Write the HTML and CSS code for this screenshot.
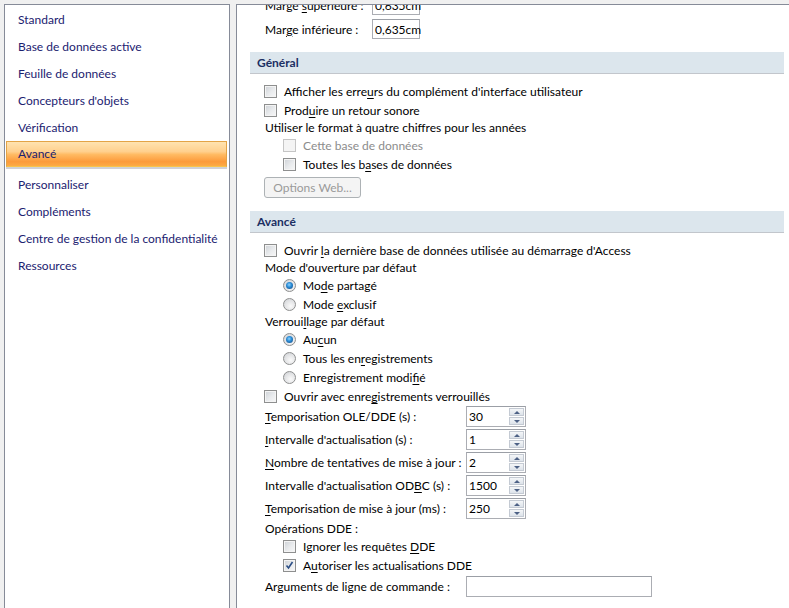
FILE: index.html
```html
<!DOCTYPE html>
<html lang="fr">
<head>
<meta charset="utf-8">
<title>Options Access - Avancé</title>
<link rel="stylesheet" href="styles.css">
</head>
<body>
<div class="window">
  <nav class="nav">
    <ul class="nav-list">
      <li class="nav-item">Standard</li>
      <li class="nav-item">Base de données active</li>
      <li class="nav-item">Feuille de données</li>
      <li class="nav-item">Concepteurs d'objets</li>
      <li class="nav-item">Vérification</li>
      <li class="nav-item selected">Avancé</li>
      <li class="nav-item">Personnaliser</li>
      <li class="nav-item">Compléments</li>
      <li class="nav-item">Centre de gestion de la confidentialité</li>
      <li class="nav-item">Ressources</li>
    </ul>
  </nav>
  <main class="panel">
    <div class="scroll">
      <div class="margins">
        <div class="field-row margin-row"><span class="margin-label">Marge <u>s</u>upérieure :</span><span class="textbox small">0,635cm</span></div>
        <div class="field-row margin-row"><span class="margin-label">Mar<u>g</u>e inférieure :</span><span class="textbox small">0,635cm</span></div>
      </div>

      <h2 class="section-head">Général</h2>
      <div class="section-body">
        <div class="check-row"><span class="cb"></span><span>Afficher les erre<u>u</u>rs du complément d'interface utilisateur</span></div>
        <div class="check-row"><span class="cb"></span><span>Prod<u>u</u>ire un retour sonore</span></div>
        <div class="label-row">Utiliser le format à quatre chiffres pour les années</div>
        <div class="check-row sub disabled"><span class="cb"></span><span>Cette base de données</span></div>
        <div class="check-row sub"><span class="cb"></span><span>Toutes les b<u>a</u>ses de données</span></div>
        <div class="button-row"><span class="btn disabled">Options Web...</span></div>
      </div>

      <h2 class="section-head">Avancé</h2>
      <div class="section-body">
        <div class="check-row"><span class="cb"></span><span>Ouvrir <u>l</u>a dernière base de données utilisée au démarrage d'Access</span></div>
        <div class="label-row">Mode d'ouverture par défaut</div>
        <div class="check-row sub"><span class="rb on"></span><span>Mo<u>d</u>e partagé</span></div>
        <div class="check-row sub"><span class="rb"></span><span>Mode <u>e</u>xclusif</span></div>
        <div class="label-row">Verroui<u>l</u>lage par défaut</div>
        <div class="check-row sub"><span class="rb on"></span><span>Au<u>c</u>un</span></div>
        <div class="check-row sub"><span class="rb"></span><span>Tous les en<u>r</u>egistrements</span></div>
        <div class="check-row sub"><span class="rb"></span><span>Enregistrement modi<u>f</u>ié</span></div>
        <div class="check-row"><span class="cb"></span><span>Ouvrir avec enre<u>g</u>istrements verrouillés</span></div>

        <div class="spin-list">
          <div class="field-row"><span class="field-label"><u>T</u>emporisation OLE/DDE (s) :</span><span class="textbox spin"><span class="val">30</span><span class="spin-btns"><span class="sb up"></span><span class="sb down"></span></span></span></div>
          <div class="field-row"><span class="field-label"><u>I</u>ntervalle d'actualisation (s) :</span><span class="textbox spin"><span class="val">1</span><span class="spin-btns"><span class="sb up"></span><span class="sb down"></span></span></span></div>
          <div class="field-row"><span class="field-label"><u>N</u>ombre de tentatives de mise à jour :</span><span class="textbox spin"><span class="val">2</span><span class="spin-btns"><span class="sb up"></span><span class="sb down"></span></span></span></div>
          <div class="field-row"><span class="field-label">Intervalle d'actualisation OD<u>B</u>C (s) :</span><span class="textbox spin"><span class="val">1500</span><span class="spin-btns"><span class="sb up"></span><span class="sb down"></span></span></span></div>
          <div class="field-row"><span class="field-label"><u>T</u>emporisation de mise à jour (ms) :</span><span class="textbox spin"><span class="val">250</span><span class="spin-btns"><span class="sb up"></span><span class="sb down"></span></span></span></div>
        </div>

        <div class="label-row dde">Opérations DDE :</div>
        <div class="check-row sub"><span class="cb"></span><span>Ignorer les requêtes <u>D</u>DE</span></div>
        <div class="check-row sub"><span class="cb checked"><svg viewBox="0 0 13 13" width="13" height="13"><path d="M3.5 6.5 L5.5 9 L9.5 3" fill="none" stroke="#2b4e86" stroke-width="1.6"/></svg></span><span>A<u>u</u>toriser les actualisations DDE</span></div>
        <div class="field-row args"><span class="field-label">Arguments de ligne de commande :</span><span class="textbox wide"></span></div>
      </div>
    </div>
  </main>
</div>
</body>
</html>
```

FILE: styles.css
```css
html, body {
  margin: 0;
  padding: 0;
}
body {
  background: #f0f0f0;
  font-family: Lato, "Liberation Sans", sans-serif;
  font-size: 12px;
  color: #000;
  height: 608px;
  overflow: hidden;
}
u {
  text-decoration: underline;
  text-underline-offset: 2px;
}
.window {
  display: flex;
  gap: 6px;
  padding: 4px 0 0 4px;
  height: 604px;
}

/* ---------- left navigation ---------- */
.nav {
  width: 224px;
  flex: none;
  background: #fff;
  border: 1px solid #868b98;
  border-bottom: none;
}
.nav-list {
  list-style: none;
  margin: 0;
  padding: 1px 0 0 0;
}
.nav-item {
  height: 27px;
  line-height: 27px;
  padding-left: 13px;
  color: #1b2170;
  white-space: nowrap;
}
.nav-item.selected {
  height: 26px;
  line-height: 24px;
  box-sizing: border-box;
  margin: 0 2px 4px 1px;
  padding-left: 11px;
  border: 1px solid #e3a447;
  border-bottom-color: #f7c34c;
  background: linear-gradient(#ffe3b0 0%, #ffd08e 40%, #ffbb63 52%, #fc9a3a 82%, #fdac45 100%);
  box-shadow: 0 2px 0 0 #d0d1d6;
}

/* ---------- right panel ---------- */
.panel {
  flex: 1;
  background: #fff;
  border-left: 1px solid #868b98;
  border-top: 1px solid #868b98;
  overflow: hidden;
}
.scroll {
  margin-top: -10px;
  padding: 0 5px 0 13px;
}
.margins {
  display: flex;
  flex-direction: column;
  gap: 4px;
}
.field-row {
  display: flex;
  align-items: center;
  padding-left: 15px;
  height: 21px;
}
.margin-row {
  height: 20px;
}
.margin-label {
  width: 107px;
  flex: none;
}
.field-label {
  width: 201px;
  flex: none;
  white-space: nowrap;
}
.textbox {
  box-sizing: border-box;
  height: 21px;
  border: 1px solid #abadb3;
  border-top-color: #9b9fa6;
  background: #fff;
  display: flex;
  align-items: center;
  padding-left: 2px;
}
.textbox.small {
  width: 48px;
  height: 20px;
}
.textbox.spin {
  width: 60px;
  justify-content: space-between;
  padding-right: 1px;
}
.textbox.wide {
  width: 186px;
}
.spin-btns {
  display: flex;
  flex-direction: column;
  gap: 1px;
  height: 17px;
}
.sb {
  width: 15px;
  height: 8px;
  box-sizing: border-box;
  border: 1px solid #c4cad3;
  background: linear-gradient(#f4f6f8, #dde3ea);
  display: flex;
  align-items: center;
  justify-content: center;
}
.sb::after {
  content: "";
  width: 0;
  height: 0;
  border-left: 3px solid transparent;
  border-right: 3px solid transparent;
}
.sb.up::after {
  border-bottom: 3px solid #4d6185;
}
.sb.down::after {
  border-top: 3px solid #4d6185;
}

.section-head {
  margin: 13px 0 0 0;
  height: 21px;
  line-height: 21px;
  padding-left: 7px;
  font-size: 12px;
  font-weight: bold;
  color: #1b2f63;
  background: #dce6ed;
  border-bottom: 1px solid #c2c6cc;
}
.section-body {
  padding-top: 8px;
}
.check-row {
  display: flex;
  align-items: center;
  gap: 7px;
  height: 19px;
  padding-left: 14px;
  white-space: nowrap;
}
.check-row.sub {
  padding-left: 33px;
}
.check-row.disabled {
  color: #8c8c8c;
}
.label-row {
  height: 16px;
  line-height: 16px;
  padding-left: 15px;
}
.cb {
  width: 13px;
  height: 13px;
  box-sizing: border-box;
  border: 1px solid #8e8f8f;
  background: linear-gradient(135deg, #cdd1d6 0%, #e9ebed 55%, #f7f7f7 100%);
  box-shadow: inset 0 0 0 1px #f4f4f4;
  flex: none;
  position: relative;
}
.cb.checked svg {
  position: absolute;
  left: -1px;
  top: -1px;
}
.disabled .cb {
  border-color: #c5c5c5;
  background: #f4f4f4;
  box-shadow: none;
}
.rb {
  width: 13px;
  height: 13px;
  box-sizing: border-box;
  border-radius: 50%;
  border: 1px solid #8e8f8f;
  background: radial-gradient(circle at 60% 65%, #fafafa 0%, #e2e3e5 55%, #c9cdd2 100%);
  flex: none;
  display: flex;
  align-items: center;
  justify-content: center;
}
.rb.on::after {
  content: "";
  width: 7px;
  height: 7px;
  border-radius: 50%;
  background: radial-gradient(circle at 45% 40%, #8fd3ff 0%, #2d8fd8 40%, #0d3f7a 100%);
}
.button-row {
  padding: 3px 0 0 14px;
}
.btn {
  display: inline-flex;
  align-items: center;
  justify-content: center;
  box-sizing: border-box;
  width: 97px;
  height: 21px;
  border: 1px solid #adb2b5;
  border-radius: 3px;
  background: #f4f4f4;
}
.btn.disabled {
  color: #9a9a9a;
}
.spin-list {
  display: flex;
  flex-direction: column;
  gap: 2px;
}
.label-row.dde {
  margin-top: 2px;
}
.field-row.args {
  margin-top: 1px;
}
```
